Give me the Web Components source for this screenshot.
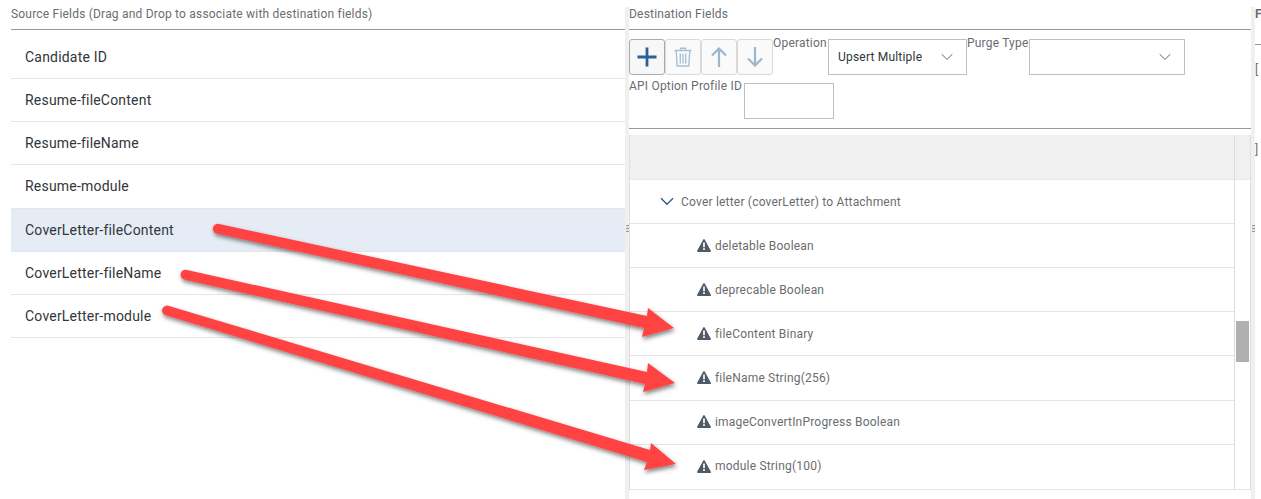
<!DOCTYPE html>
<html>
<head>
<meta charset="utf-8">
<style>
  html, body { margin: 0; padding: 0; background: #fff; overflow: hidden; }
  body { width: 1261px; height: 499px; font-family: Roboto, "Noto Sans", sans-serif; letter-spacing: .2px; }
</style>
</head>
<body>
<mapping-page>
  <source-pane slot="source" title="Source Fields (Drag and Drop to associate with destination fields)">
    <source-row>Candidate ID</source-row>
    <source-row>Resume-fileContent</source-row>
    <source-row>Resume-fileName</source-row>
    <source-row>Resume-module</source-row>
    <source-row selected>CoverLetter-fileContent</source-row>
    <source-row>CoverLetter-fileName</source-row>
    <source-row>CoverLetter-module</source-row>
  </source-pane>
  <dest-pane slot="dest">
    <dest-row group>Cover letter (coverLetter) to Attachment</dest-row>
    <dest-row>deletable Boolean</dest-row>
    <dest-row>deprecable Boolean</dest-row>
    <dest-row>fileContent Binary</dest-row>
    <dest-row tall>fileName String(256)</dest-row>
    <dest-row up>imageConvertInProgress Boolean</dest-row>
    <dest-row up>module String(100)</dest-row>
  </dest-pane>
  <side-pane slot="side"></side-pane>
</mapping-page>
<script>
class MappingPage extends HTMLElement {
  constructor() {
    super();
    this.attachShadow({mode: 'open'}).innerHTML = `
      <style>
        :host { display: block; position: relative; width: 1261px; height: 499px; overflow: hidden; }
        .main { display: flex; height: 100%; }
        .split {
          flex: none;
          width: 4px;
          height: 492px;
          margin-top: 7px;
          box-sizing: border-box;
          padding-bottom: 50px;
          background: #f0f0f0;
          display: flex;
          align-items: center;
          justify-content: center;
        }
        .split i { display: block; width: 3px; height: 7px;
          background: repeating-linear-gradient(#9a9a9a 0 1px, #e2e2e2 1px 3px); }
        svg { position: absolute; left: 0; top: 0; pointer-events: none; }
      </style>
      <div class="main">
        <slot name="source"></slot>
        <div class="split"><i></i></div>
        <slot name="dest"></slot>
        <div class="split"><i></i></div>
        <slot name="side"></slot>
      </div>
      <svg width="1261" height="499" viewBox="0 0 1261 499">
        <defs>
          <filter id="sh" x="-5%" y="-20%" width="110%" height="140%">
            <feDropShadow dx="1" dy="2.5" stdDeviation="2" flood-color="#000" flood-opacity="0.5"/>
          </filter>
        </defs>
        <g filter="url(#sh)" fill="#ff4343" stroke="none">
          <path d="M219 224 L647 316 L648 308 L674 328 L642 337 L644 328 L216.5 233.5 A4.8 4.8 0 0 1 219 224Z"/>
          <path d="M187 270 L647 372 L648 363 L675 383 L643 392 L645 384 L184 279.5 A4.8 4.8 0 0 1 187 270Z"/>
          <path d="M169 306 L650 450 L651 443 L676 464 L644 470 L647 462 L165 315 A4.8 4.8 0 0 1 169 306Z"/>
        </g>
      </svg>`;
  }
}
customElements.define('mapping-page', MappingPage);

class SourcePane extends HTMLElement {
  constructor() {
    super();
    this.attachShadow({mode: 'open'}).innerHTML = `
      <style>
        :host { display: block; flex: none; width: 625px; box-sizing: border-box; padding-left: 11px; }
        .title { height: 30px; box-sizing: border-box; padding-top: 6px; font-size: 12px; line-height: 17px;
          color: #6a6d70; border-bottom: 1px solid #999; }
        .list { padding-top: 5.8px; }
      </style>
      <div class="title"></div>
      <div class="list"><slot></slot></div>`;
    this.shadowRoot.querySelector('.title').textContent = this.getAttribute('title');
    this.removeAttribute('title');
  }
}
customElements.define('source-pane', SourcePane);

class SourceRow extends HTMLElement {
  constructor() {
    super();
    this.attachShadow({mode: 'open'}).innerHTML = `
      <style>
        :host {
          display: flex; align-items: center; height: 43.2px; box-sizing: border-box;
          padding-left: 14px; font-size: 14px; color: #32363a;
          border-bottom: 1px solid #e5e5e5;
        }
        :host([selected]) { background: #e5ecf5; }
      </style>
      <slot></slot>`;
  }
}
customElements.define('source-row', SourceRow);

class ToolButton extends HTMLElement {
  constructor() {
    super();
    this.attachShadow({mode: 'open'}).innerHTML = `
      <style>
        :host {
          display: flex; align-items: center; justify-content: center; flex: none;
          width: 36px; height: 36px; box-sizing: border-box;
          border: 1px solid #d9d9d9; border-radius: 3px; background: #fafafa;
        }
        :host([active]) { border-color: #ababab; background: #f7f7f7; }
      </style>
      <slot></slot>`;
  }
}
customElements.define('tool-button', ToolButton);

class SelectBox extends HTMLElement {
  constructor() {
    super();
    this.attachShadow({mode: 'open'}).innerHTML = `
      <style>
        :host {
          display: flex; align-items: center; justify-content: space-between; flex: none;
          height: 36px; box-sizing: border-box; padding: 0 13px 0 9px;
          border: 1px solid #bfbfbf; background: #fff; font-size: 12px; color: #32363a;
        }
        svg { display: block; }
      </style>
      <span><slot></slot></span>
      <svg width="12" height="8" viewBox="0 0 12 8"><path d="M.7 1.2 6 6.4l5.3-5.2" fill="none" stroke="#4d6f8f" stroke-width="1"/></svg>`;
  }
}
customElements.define('select-box', SelectBox);

class DestPane extends HTMLElement {
  constructor() {
    super();
    this.attachShadow({mode: 'open'}).innerHTML = `
      <style>
        :host { display: block; flex: none; width: 622px; box-sizing: border-box; font-size: 12px; color: #6a6d70; }
        .title { height: 30px; box-sizing: border-box; padding-top: 6px; line-height: 17px; border-bottom: 1px solid #999; }
        .bar { height: 99px; box-sizing: border-box; padding-top: 9px; border-bottom: 1px solid #999; }
        .line { display: flex; height: 36px; }
        .line + .line { margin-top: 8px; }
        .line + .line label { margin-top: -1px; }
        .tools { display: flex; width: 144px; flex: none; }
        label { flex: none; display: block; line-height: 8px; white-space: nowrap; }
        .input { flex: none; width: 90px; height: 36px; box-sizing: border-box; border: 1px solid #bfbfbf; }
        .table { margin-top: 6px; height: 355px; box-sizing: border-box;
          display: grid; grid-template-columns: 1fr 16px; grid-template-rows: 45px 1fr;
          border-left: 1px solid #e0e0e0; border-right: 1px solid #e0e0e0; border-bottom: 1px solid #e5e5e5; }
        .head { box-sizing: border-box; background: #f0f0f0; border-bottom: 1px solid #e5e5e5; }
        .head.c { border-left: 1px solid #dcdcdc; }
        .track { border-left: 1px solid #dcdcdc; padding: 141px 1px 0 1px; }
        .thumb { height: 41px; background: #b0b0b0; }
      </style>
      <div class="title">Destination Fields</div>
      <div class="bar">
        <div class="line">
          <div class="tools">
            <tool-button active><svg width="20" height="20" viewBox="0 0 20 20"><path d="M10 .5v19M.5 10h19" stroke="#2b6192" stroke-width="2.8" fill="none"/></svg></tool-button>
            <tool-button><svg width="18" height="20" viewBox="0 0 18 20" fill="none" stroke="#a9bfd2" stroke-width="1.4"><path d="M.5 3.5h17M6.5 3.2V1.2h5v2M2.2 4l1 15h11.6l1-15M6.3 6.5v10M9 6.5v10M11.7 6.5v10"/></svg></tool-button>
            <tool-button><svg width="16" height="22" viewBox="0 0 16 22" fill="none" stroke="#9db6cc" stroke-width="2.2"><path d="M8 21V3M1 9.5 8 2.5l7 7"/></svg></tool-button>
            <tool-button><svg width="16" height="22" viewBox="0 0 16 22" fill="none" stroke="#9db6cc" stroke-width="2.2"><path d="M8 1v18M1 12.5l7 7 7-7"/></svg></tool-button>
          </div>
          <label style="width:55px">Operation</label>
          <select-box style="width:139px">Upsert Multiple</select-box>
          <label style="width:62px">Purge Type</label>
          <select-box style="width:156px"></select-box>
        </div>
        <div class="line">
          <label style="width:115px">API Option Profile ID</label>
          <div class="input"></div>
        </div>
      </div>
      <div class="table">
        <div class="head"></div>
        <div class="head c"></div>
        <div class="rows"><slot></slot></div>
        <div class="track"><div class="thumb"></div></div>
      </div>`;
  }
}
customElements.define('dest-pane', DestPane);

class DestRow extends HTMLElement {
  constructor() {
    super();
    const group = this.hasAttribute('group');
    const icon = group
      ? `<svg width="14" height="9" viewBox="0 0 14 9"><path d="M1 1.2 7 7.2 13 1.2" fill="none" stroke="#2f5d86" stroke-width="1.4"/></svg>`
      : `<svg width="14" height="13" viewBox="0 0 14 13"><path d="M7 .9 13.2 12.1H.8Z" fill="#4f5b67" stroke="#4f5b67" stroke-width="1.6" stroke-linejoin="round"/><path d="M7 3.6v4.6M7 9.2v1.8" stroke="#fff" stroke-width="1.7"/></svg>`;
    this.attachShadow({mode: 'open'}).innerHTML = `
      <style>
        :host {
          display: flex; align-items: center; gap: 4px; height: 44px; box-sizing: border-box;
          padding-left: 67px; font-size: 12px; color: #6a6d70; border-bottom: 1px solid #e5e5e5;
        }
        :host([group]) { padding-left: 30px; gap: 7px; }
        :host([tall]) { height: 45px; padding-bottom: 1px; }
        :host([up]) { padding-bottom: 2px; }
        :host(:last-child) { border-bottom: none; }
        svg { display: block; flex: none; }
      </style>
      ${icon}<span><slot></slot></span>`;
  }
}
customElements.define('dest-row', DestRow);

class SidePane extends HTMLElement {
  constructor() {
    super();
    this.attachShadow({mode: 'open'}).innerHTML = `
      <style>
        :host { display: block; flex: 1; min-width: 0; overflow: hidden; font-size: 12px; color: #6a6d70; }
        .title { height: 45px; box-sizing: border-box; padding-top: 6px; line-height: 17px; font-weight: 700; border-bottom: 1px solid #999; }
        .a { margin-top: 17px; line-height: 17px; }
        .b { margin-top: 63px; line-height: 17px; }
      </style>
      <div class="title">F</div>
      <div class="a">[</div>
      <div class="b">]</div>`;
  }
}
customElements.define('side-pane', SidePane);
</script>
</body>
</html>
